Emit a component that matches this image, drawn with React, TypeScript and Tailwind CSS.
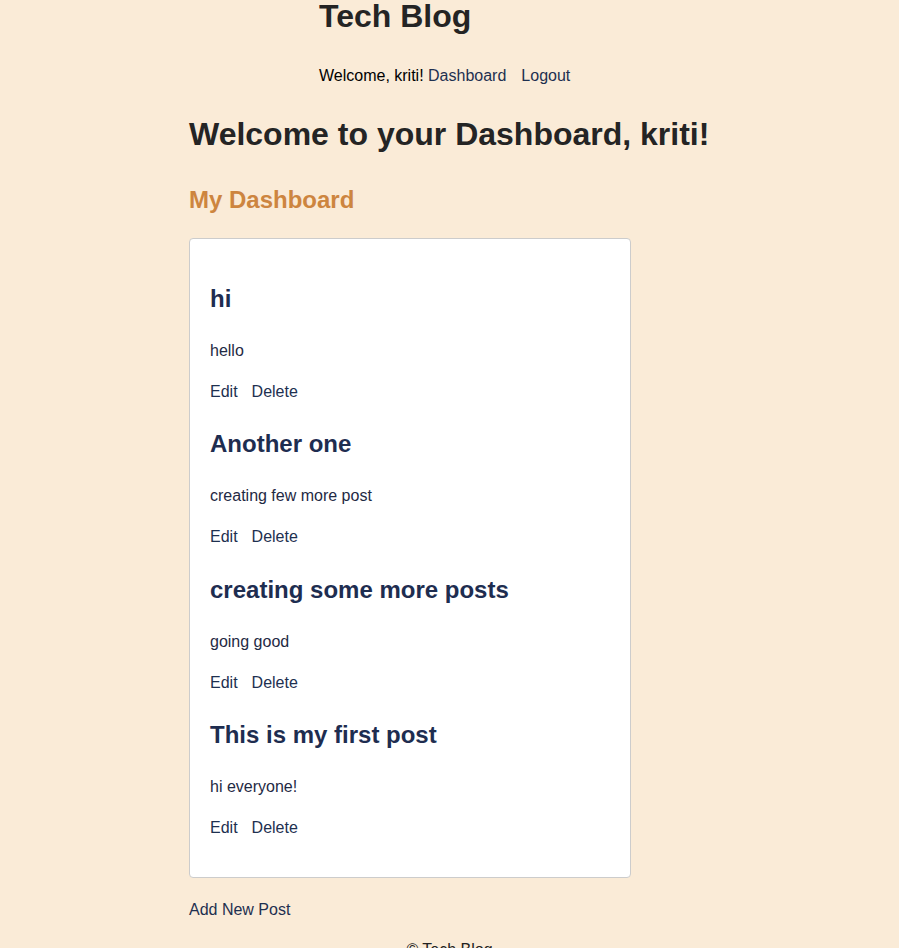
const posts = [
  { title: "hi", body: "hello" },
  { title: "Another one", body: "creating few more post" },
  { title: "creating some more posts", body: "going good" },
  { title: "This is my first post", body: "hi everyone!" },
];

function PostItem({ title, body, first }: { title: string; body: string; first: boolean }) {
  return (
    <div className={first ? "" : "mt-[29.3px]"}>
      <h2 className="text-[24px] leading-[28px] font-bold text-[#1e2d50]">{title}</h2>
      <p className="mt-[29px] text-[16px] leading-[18px] text-[#1f2a44]">{body}</p>
      <div className="mt-[23px] flex gap-[14px] text-[16px] leading-[18px] text-[#1e3050]">
        <a href="#">Edit</a>
        <a href="#">Delete</a>
      </div>
    </div>
  );
}

export default function App() {
  return (
    <div className="min-h-[948px] bg-[#faebd7] font-['Liberation_Sans',Arial,sans-serif] text-[#222]">
      <header className="flex justify-center">
        <div className="w-[261px] flex flex-col items-start">
          <h1 className="text-[32px] leading-[33px] font-bold text-[#242424]">Tech Blog</h1>
          <nav className="mt-[34px] text-[16px] leading-[18px] whitespace-nowrap">
            <span className="text-black">Welcome, kriti! </span>
            <a href="#" className="text-[#1e3050] mr-[15px]">Dashboard</a>
            <a href="#" className="text-[#1e3050]">Logout</a>
          </nav>
        </div>
      </header>

      <main className="w-[521px] mx-auto">
        <h1 className="mt-[31px] text-[32px] leading-[37px] font-bold text-[#242424] whitespace-nowrap">
          Welcome to your Dashboard, kriti!
        </h1>
        <h2 className="mt-[33px] text-[24px] leading-[28px] font-bold text-[#cd853f]">My Dashboard</h2>

        <div className="mt-[24px] w-[442px] bg-white border border-[#cccccc] rounded-[4px] pt-[46px] pb-[40px] px-[20px]">
          {posts.map((p, i) => (
            <PostItem key={p.title} title={p.title} body={p.body} first={i === 0} />
          ))}
        </div>

        <a href="#" className="block mt-[23px] text-[16px] leading-[18px] text-[#1e3050]">Add New Post</a>
      </main>

      <footer className="mt-[22px] text-center text-[16px] leading-[18px] text-[#222]">© Tech Blog</footer>
    </div>
  );
}
